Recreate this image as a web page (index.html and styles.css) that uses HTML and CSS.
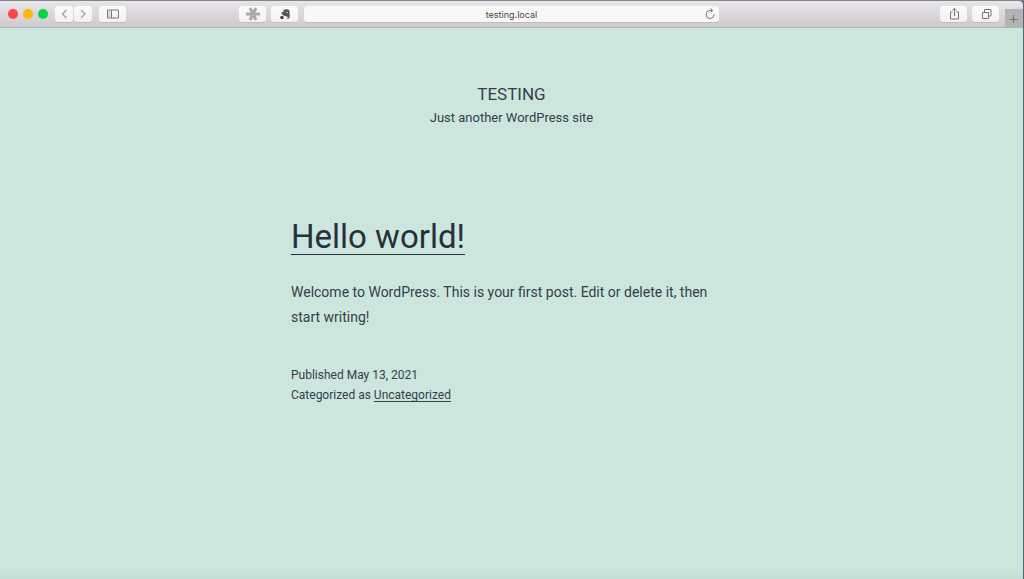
FILE: index.html
```html
<!DOCTYPE html>
<html lang="en">
<head>
<meta charset="utf-8">
<meta name="viewport" content="width=device-width, initial-scale=1">
<title>Testing</title>
<link rel="stylesheet" href="styles.css">
</head>
<body>
<div class="window">
  <div class="toolbar">
    <div class="group group-left">
      <div class="lights">
        <button class="light close" aria-label="Close"></button>
        <button class="light minimize" aria-label="Minimize"></button>
        <button class="light maximize" aria-label="Zoom"></button>
      </div>
      <div class="nav">
        <button class="tool nav-tool" aria-label="Back"><svg width="18" height="16" viewBox="0 0 18 16"><path d="M11.500 4 7.500 8l4 4" stroke="#a2a2a2" stroke-width="1.300"/></svg></button>
        <button class="tool nav-tool" aria-label="Forward"><svg width="18" height="16" viewBox="0 0 18 16"><path d="M7 4l4 4-4 4" stroke="#a2a2a2" stroke-width="1.300"/></svg></button>
      </div>
      <button class="tool" aria-label="Sidebar"><svg width="18" height="16" viewBox="0 0 18 16"><path d="M3.500 4h11v8h-11zM7.500 4v8" stroke="#777"/><path d="M4.500 6h2M4.500 8h2M4.500 10h2" stroke="#aaa"/></svg></button>
      <div class="extensions">
        <button class="tool" aria-label="Extension"><svg width="18" height="16" viewBox="0 0 18 16"><path d="M9 8 6 2M9 8l3-6M9 8H2M9 8h7M9 8l-3 6M9 8l3 6" stroke="#a9a9a9" stroke-width="3"/></svg></button>
        <button class="tool" aria-label="Clipper"><svg width="18" height="16" viewBox="0 0 18 16"><path d="M7.500 3.800Q10 2.800 13 3.800Q14 6 13.500 12Q12.500 13.200 11 12.500V10.500L9 10Q7 9.500 5.500 7.500L5.800 6H7.500Z" fill="#555"/><circle cx="6" cy="11.500" r="1.800" fill="#484848"/><path d="M10.500 6.500h1.500M10.500 11.500h1.500" stroke="#ccc"/></svg></button>
      </div>
    </div>
    <div class="address">
      <input class="url" type="text" value="testing.local" aria-label="Address">
      <button class="reload" aria-label="Reload"><svg width="12" height="14" viewBox="0 0 12 14"><path d="M10 7.500a4 4 0 1 1-4-4h2.500M6.500 1.500l2.200 2-2.200 2" stroke="#777"/></svg></button>
    </div>
    <div class="group group-right">
      <button class="tool" aria-label="Share"><svg width="18" height="16" viewBox="0 0 18 16"><path d="M7.500 6H5.500v7h8V6h-2M9.500 10V2.500M7.300 4.500 9.500 2.300l2.200 2.200" stroke="#777"/></svg></button>
      <button class="tool" aria-label="Tab overview"><svg width="18" height="16" viewBox="0 0 18 16"><path d="M5.500 6.500h6v6h-6zM7.500 6.500v-3h6.500v6.500h-2.500" stroke="#777"/></svg></button>
    </div>
    <button class="new-tab" aria-label="New tab"><svg width="17" height="18" viewBox="0 0 17 18"><path d="M8.500 6v8M4.500 10.500h8" stroke="#777"/></svg></button>
  </div>
  <div class="page">
    <header class="site-header">
      <h1 class="site-title">TESTING</h1>
      <p class="tagline">Just another WordPress site</p>
    </header>
    <main class="content">
      <article>
        <h2 class="entry-title"><a href="#">Hello world!</a></h2>
        <p class="entry-text">Welcome to WordPress. This is your first post. Edit or delete it, then start writing!</p>
        <footer class="entry-meta">
          <p>Published <time datetime="2021-05-13">May 13, 2021</time></p>
          <p>Categorized as <a href="#">Uncategorized</a></p>
        </footer>
      </article>
    </main>
  </div>
</div>
</body>
</html>
```
FILE: styles.css
```css
* { box-sizing: border-box; margin: 0; padding: 0; }
body { background: #59637a; font-family: Roboto, "Liberation Sans", sans-serif; color: #343d4a; }
svg { display: block; fill: none; }
button { border: 0; background: none; font: inherit; }
.window {
  min-height: 100vh;
  border-top: 1px solid #89838f;
  border-right: 1px solid #59637a;
  display: flex;
  flex-direction: column;
}
.toolbar {
  height: 27px;
  display: grid;
  grid-template-columns: 1fr 415px 1fr;
  align-items: center;
  position: relative;
  background: linear-gradient(#e8e6e8, #cccacc);
  border-bottom: 1px solid #b3b5b4;
  border-radius: 0 4px 0 0;
}
.group { display: flex; align-items: center; }
.group-left { padding: 0 6px 0 8px; }
.group-right { justify-content: flex-end; gap: 5px; padding-right: 24px; }
.lights { display: flex; gap: 5px; margin-right: 7px; }
.light { width: 10px; height: 10px; border-radius: 50%; }
.close { background: #fc4646; }
.minimize { background: #fdb90b; }
.maximize { background: #06d443; }
.nav { display: flex; gap: 1px; margin-right: 7px; }
.extensions { display: flex; gap: 5px; margin-left: auto; }
.tool {
  width: 27px;
  height: 16px;
  display: flex;
  align-items: center;
  justify-content: center;
  background: linear-gradient(#fbfbfb, #f2f2f2);
  border-radius: 3px;
  box-shadow: 0 1px 0 #bdbdbd;
}
.nav-tool { width: 18px; }
.address {
  height: 16px;
  display: flex;
  align-items: center;
  background: #f8f8f8;
  border-radius: 3px;
  box-shadow: 0 1px 0 #bdbdbd;
}
.url {
  flex: 1;
  min-width: 0;
  padding-left: 15px;
  border: 0;
  background: none;
  text-align: center;
  font: 9px Inter, "Liberation Sans", sans-serif;
  color: #444;
}
.reload { width: 15px; }
.new-tab {
  position: absolute;
  right: 0;
  bottom: 0;
  width: 18px;
  height: 18px;
  background: #b4b3b4;
}
.page {
  flex: 1;
  background: linear-gradient(transparent calc(100% - 12px), #c4dfd5), #cde6dd;
  padding: 53px 24px;
}
.site-header { text-align: center; }
.site-title { font-size: 17px; line-height: 26px; font-weight: 400; }
.tagline { font-size: 13px; line-height: 22px; }
.content { max-width: 441px; margin: 84px auto 0; }
.entry-title { font-size: 33px; line-height: 48px; font-weight: 400; color: #28303d; }
.entry-title a {
  color: inherit;
  text-decoration-thickness: 1px;
  text-underline-offset: 6px;
  text-decoration-skip-ink: none;
}
.entry-text { margin-top: 19px; font-size: 14px; line-height: 25px; }
.entry-meta { margin-top: 35px; font-size: 12px; line-height: 20px; }
.entry-meta a { color: inherit; text-underline-offset: 2px; text-decoration-skip-ink: none; }
```
